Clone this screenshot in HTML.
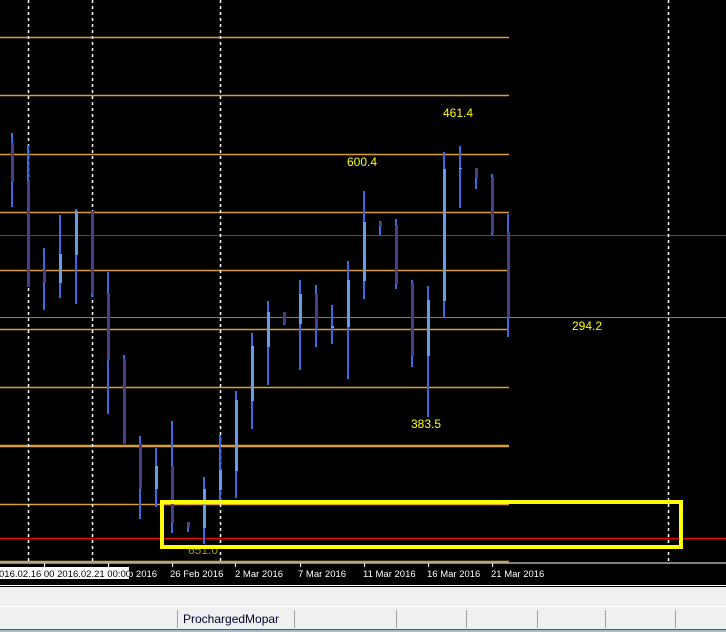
<!DOCTYPE html>
<html><head><meta charset="utf-8"><style>
html,body{margin:0;padding:0;background:#000;width:726px;height:632px;overflow:hidden}
svg{display:block}
text{font-family:"Liberation Sans",sans-serif}
</style></head><body>
<svg width="726" height="632" xmlns="http://www.w3.org/2000/svg">
<rect x="0" y="0" width="726" height="584" fill="#000"/>
<!-- orange levels -->
<g stroke="#d9a030" stroke-width="1.5">
<line x1="0" y1="37.5" x2="509" y2="37.5"/>
<line x1="0" y1="95.5" x2="509" y2="95.5"/>
<line x1="0" y1="154.5" x2="509" y2="154.5"/>
<line x1="0" y1="212.5" x2="509" y2="212.5"/>
<line x1="0" y1="270.5" x2="509" y2="270.5"/>
<line x1="0" y1="329.5" x2="509" y2="329.5"/>
<line x1="0" y1="387.5" x2="509" y2="387.5"/>
<line x1="0" y1="446" x2="509" y2="446" stroke-width="2.5"/>
<line x1="0" y1="504.5" x2="509" y2="504.5"/>
<line x1="0" y1="561.5" x2="509" y2="561.5"/>
</g>
<line x1="0" y1="317.5" x2="726" y2="317.5" stroke="#808080"/>
<line x1="0" y1="235.5" x2="726" y2="235.5" stroke="#e01010"/>
<line x1="0" y1="538.5" x2="726" y2="538.5" stroke="#ff0000"/>
<!-- dashed verticals -->
<g stroke="#fff" stroke-width="1.5" stroke-dasharray="3,3">
<line x1="28.5" y1="0" x2="28.5" y2="562"/>
<line x1="92.5" y1="0" x2="92.5" y2="562"/>
<line x1="220.5" y1="0" x2="220.5" y2="562"/>
<line x1="668.5" y1="0" x2="668.5" y2="562"/>
</g>
<g id="bars"></g>
<!-- labels -->
<g fill="#ffff00" font-size="12">
<text x="443" y="117">461.4</text>
<text x="347" y="166">600.4</text>
<text x="572" y="330">294.2</text>
<text x="411" y="428">383.5</text>
<text x="188" y="554" fill="#9a9a00">651.0</text>
</g>
<!-- yellow box -->
<rect x="162" y="502" width="519" height="45" fill="none" stroke="#ffff00" stroke-width="4"/>
<!-- axis -->
<line x1="0" y1="563" x2="726" y2="563" stroke="#fff"/>
<g stroke="#fff">
<line x1="44.5" y1="563" x2="44.5" y2="567"/><line x1="108.5" y1="563" x2="108.5" y2="567"/>
<line x1="172.5" y1="563" x2="172.5" y2="567"/><line x1="235.5" y1="563" x2="235.5" y2="567"/>
<line x1="300.5" y1="563" x2="300.5" y2="567"/><line x1="364.5" y1="563" x2="364.5" y2="567"/>
<line x1="428.5" y1="563" x2="428.5" y2="567"/><line x1="492.5" y1="563" x2="492.5" y2="567"/>
</g>
<g fill="#fff" font-size="9.5">
<text x="128" y="577">b 2016</text>
<text x="170" y="577">26 Feb 2016</text>
<text x="235" y="577">2 Mar 2016</text>
<text x="298" y="577">7 Mar 2016</text>
<text x="363" y="577">11 Mar 2016</text>
<text x="427" y="577">16 Mar 2016</text>
<text x="491" y="577">21 Mar 2016</text>
</g>
<rect x="0" y="567" width="129" height="12" fill="#fff"/>
<text x="-1" y="577" fill="#000" font-size="9.5">016.02.16 00   2016.02.21 00:00</text>
<!-- bottom panel -->
<rect x="0" y="584" width="726" height="1" fill="#000"/>
<rect x="0" y="585" width="726" height="1" fill="#fff"/>
<rect x="0" y="586" width="726" height="1" fill="#000"/>
<rect x="0" y="587" width="726" height="42" fill="#f0f0f0"/>
<rect x="0" y="606" width="726" height="1" fill="#fff"/>
<g fill="#a0a0a0">
<rect x="177" y="610" width="1" height="18"/><rect x="294" y="610" width="1" height="18"/>
<rect x="396" y="610" width="1" height="18"/><rect x="466" y="610" width="1" height="18"/>
<rect x="537" y="610" width="1" height="18"/><rect x="605" y="610" width="1" height="18"/>
<rect x="675" y="610" width="1" height="18"/>
</g>
<text x="183" y="623" fill="#000030" font-size="12">ProchargedMopar</text>
<rect x="0" y="629" width="726" height="1" fill="#505a66"/>
<rect x="0" y="630" width="726" height="2" fill="#a8bcd0"/>
</svg>
<script>
var d=[[12,133,207,143,182,0],[28,145,287,181,287,0],[44,248,310,270,283,0],[60,215,298,254,283,1],[76,209,304,211,255,1],[92,211,297,211,294,0],[108,272,414,293,360,0],[124,355,444,359,444,0],[140,436,519,443,489,0],[156,448,507,466,489,1],[172,421,533,466,523,0],[188,522,532,522,527,0],[204,477,544,489,528,1],[220,435,500,470,490,1],[236,391,498,400,471,1],[252,333,429,346,401,1],[268,301,385,312,347,1],[284,312,325,312,324,0],[300,280,370,294,324,1],[316,285,347,294,328,0],[332,305,344,326,328,1],[348,261,379,280,327,1],[364,191,299,222,281,1],[380,221,235,222,226,0],[396,219,289,225,284,0],[412,280,367,283,356,0],[428,286,417,300,356,1],[444,152,318,169,301,1],[460,146,208,168,169,1],[476,168,189,168,178,0],[492,174,235,177,233,0],[508,214,337,232,317,0]];
var s='';d.forEach(function(b){s+='<rect x="'+(b[0]-1)+'" y="'+b[1]+'" width="2" height="'+(b[2]-b[1])+'" fill="#3a6ae0"/>';s+='<rect x="'+(b[0]-1)+'" y="'+b[3]+'" width="3" height="'+Math.max(1,b[4]-b[3])+'" fill="'+(b[5]?'#6a9ae8':'#46408a')+'"/>';});
document.getElementById('bars').innerHTML=s;
</script>
</body></html>
